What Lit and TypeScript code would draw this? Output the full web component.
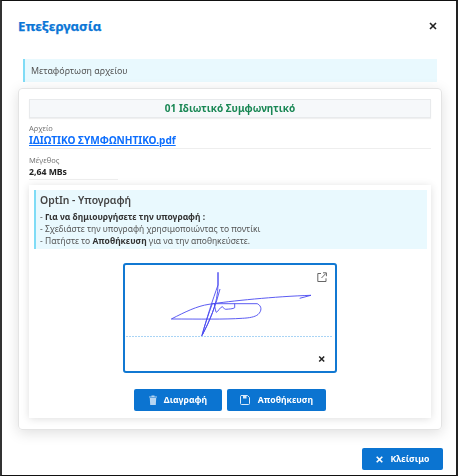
import { LitElement, html, css } from "lit";
import { customElement } from "lit/decorators.js";

@customElement("app-root")
export class AppRoot extends LitElement {
  static styles = css`
    :host { display: block; width: 460px; height: 476px; background: #fff; font-family: "Noto Sans", sans-serif; overflow: hidden; }
    .frame { box-sizing: border-box; width: 458px; height: 476px; border-top: 1px solid #111; border-bottom: 1px solid #111; border-left: 2px solid #333; border-right: 2px solid #222; background: #fff; }
    .modal { box-sizing: border-box; height: 474px; background: #fff; padding: 15px 14px 0 16px; display: flex; flex-direction: column; filter: blur(0.35px); }
    .head { display: flex; justify-content: space-between; align-items: center; height: 20px; }
    h1 { margin: 0; font-size: 13.2px; font-weight: 700; color: #0b76d6; line-height: 20px; -webkit-text-stroke: 0.25px #0b76d6; }
    .x { color: #222; display: flex; margin-right: 5px; }
    .alert { margin: 23px 5px 6px 5px; height: 23px; background: #e9f9fe; border-left: 2px solid #7fdcf6; box-sizing: border-box; padding-left: 6px; font-size: 8.9px; line-height: 23px; color: #555; }
    .card { box-sizing: border-box; height: 342px; border: 1px solid #e4e4e4; border-radius: 4px; box-shadow: 0 3px 14px rgba(0,0,0,.13); padding: 10px; display: flex; flex-direction: column; }
    .title { height: 19px; background: #f6f8fa; border: 1px solid #e8eaec; box-shadow: 0 1px 1px rgba(0,0,0,.06); text-align: center; font-size: 10px; font-weight: 700; color: #198754; line-height: 17px; box-sizing: border-box; }
    .lbl { font-size: 7.5px; color: #777; line-height: 10px; margin-top: 5px; }
    .lbl2 { margin-top: 6px; }
    .file { font-size: 10.1px; font-weight: 700; color: #0d6efd; text-decoration: underline; line-height: 15px; border-bottom: 1px solid #eee; }
    .size { font-size: 8.7px; font-weight: 700; color: #222; width: 89px; border-bottom: 1px solid #eee; line-height: 13px; margin-top: 1px; }
    .inner { flex: 1; margin-top: 5px; box-shadow: 0 1px 8px rgba(0,0,0,.13); display: flex; flex-direction: column; align-items: center; margin-bottom: 1px; }
    .info { align-self: stretch; margin: 5px 4px 0 5px; height: 59px; box-sizing: border-box; background: #e9f9fe; border-left: 2px solid #7fdcf6; padding: 2px 4px; font-size: 8.5px; color: #555; line-height: 12.2px; }
    .info h2 { margin: 0 0 3px; font-size: 10.4px; font-weight: 600; color: #444; line-height: 16px; }
    .info b { color: #333; }
    .sig { position: relative; margin-top: 14px; width: 214px; height: 110px; box-sizing: border-box; border: 2px solid #1178d2; border-radius: 3px; background: #fff; }
    .sig svg { position: absolute; left: 0; top: 0; }
    .actions { display: flex; gap: 5px; margin-top: 16px; }
    .btn { display: inline-flex; align-items: center; justify-content: center; gap: 8px; height: 22px; background: #0b74d1; color: #fff; border-radius: 2px; font-size: 8.7px; font-weight: 700; box-sizing: border-box; }
    .del { width: 88px; gap: 7px; } .save { width: 99px; }
    .foot { display: flex; justify-content: flex-end; margin-top: 18px; margin-right: -1px; }
    .close { width: 81px; }
  `;
  render() {
    return html`<div class="frame"><div class="modal">
      <div class="head"><h1>Επεξεργασία</h1>
        <span class="x"><svg width="8" height="8" viewBox="0 0 8 8"><path d="M1 1l6 6M7 1L1 7" stroke="currentColor" stroke-width="1.6"/></svg></span></div>
      <div class="alert">Μεταφόρτωση αρχείου</div>
      <div class="card">
        <div class="title">01 Ιδιωτικό Συμφωνητικό</div>
        <div class="lbl">Αρχείο</div>
        <div class="file">ΙΔΙΩΤΙΚΟ ΣΥΜΦΩΝΗΤΙΚΟ.pdf</div>
        <div class="lbl lbl2">Μέγεθος</div>
        <div class="size">2,64 MBs</div>
        <div class="inner">
          <div class="info"><h2>OptIn - Υπογραφή</h2>
            <div>- <b>Για να δημιουργήσετε την υπογραφή :</b></div>
            <div>- Σχεδιάστε την υπογραφή χρησιμοποιώντας το ποντίκι</div>
            <div>- Πατήστε το <b>Αποθήκευση</b> για να την αποθηκεύσετε.</div></div>
          <div class="sig">
            <svg width="210" height="106" viewBox="0 0 210 106" fill="none">
              <line x1="1" y1="71.5" x2="208" y2="71.5" stroke="#a9d4f5" stroke-width="1" stroke-dasharray="2 1"/>
              <path d="M46.3 54C60 47 72 41 84 39.3C105 36 150 31.5 186 30.3L174.7 33.3M46.3 54C75 54 100 54.5 117.3 53.3C124 53 130 52 133 49.5C137 46 137 41 132.3 38.7L87.3 38.7C84 48 79 62 76.7 71C84 58 93 38 93 20V7.3V20C88 34 81 55 77.3 70C85 55 91 40 95 24M89.3 38.3C90 43 90.5 46 91.3 47.3C93 47 95 42 97.3 41.7C98.5 42 99 44.5 100.7 44.3C104 44 108 44 109.7 42.7V38.7" stroke="#4a4af0" stroke-width="0.9"/>
              <g stroke="#666" stroke-width="1"><path d="M196 8.5h-3.2v8h8.2v-3.2"/><path d="M196.5 13l4.3-4.5M198 7.8h3.4v3.4"/></g>
              <path d="M194.2 91.5l5 5M199.2 91.5l-5 5" stroke="#222" stroke-width="1.5"/>
            </svg>
          </div>
          <div class="actions">
            <div class="btn del"><svg width="8" height="10" viewBox="0 0 8 10"><path d="M0 1.5h8v1H0zM2.5 .5h3v1h-3zM.8 3h6.4l-.4 7H1.2z" fill="#b6d6f2"/></svg>Διαγραφή</div>
            <div class="btn save"><svg width="10" height="10" viewBox="0 0 10 10" fill="none"><path d="M1 .5h6.5l2 2v6a1 1 0 0 1-1 1h-7a1 1 0 0 1-1-1v-7a1 1 0 0 1 .5-1z" stroke="#dbeafa"/><path d="M3 .5h3.5v3H3z" fill="#dbeafa"/></svg>Αποθήκευση</div>
          </div>
        </div>
      </div>
      <div class="foot"><div class="btn close"><svg width="7" height="7" viewBox="0 0 7 7"><path d="M.7 .7l5.6 5.6M6.3 .7L.7 6.3" stroke="#fff" stroke-width="1.6"/></svg>Κλείσιμο</div></div>
    </div></div>`;
  }
}
